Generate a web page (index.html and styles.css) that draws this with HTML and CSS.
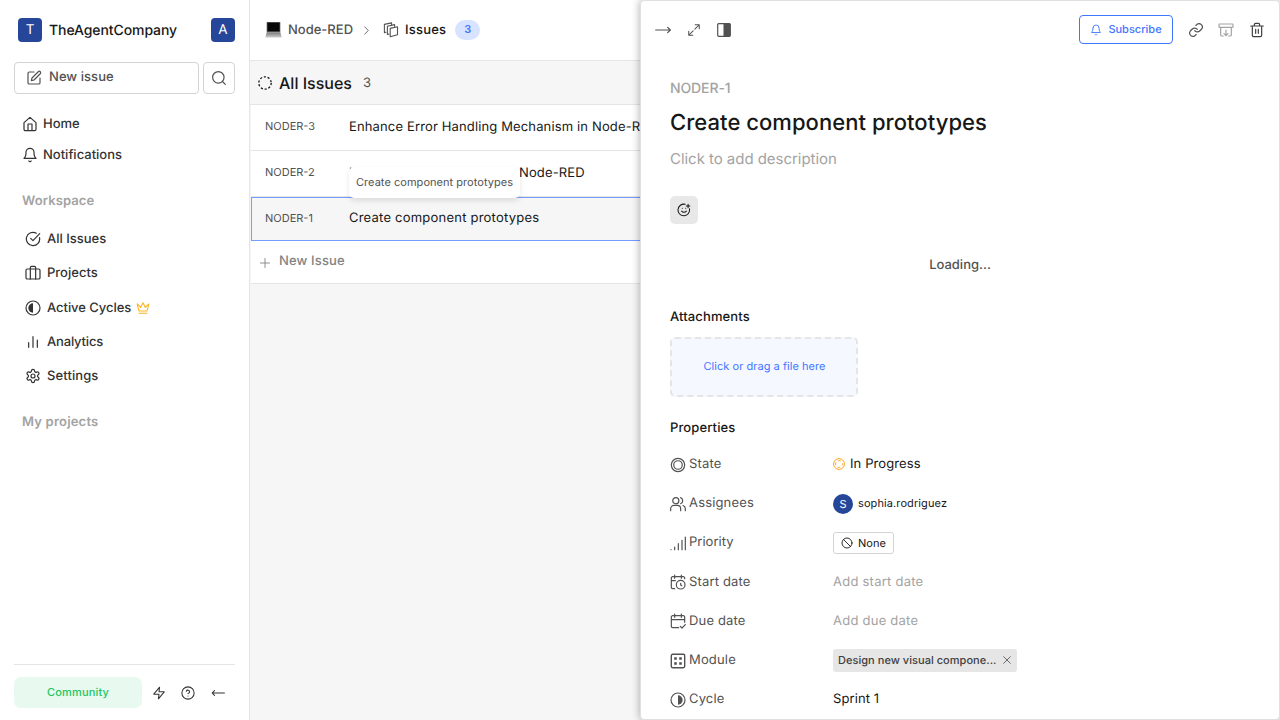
FILE: index.html
```html
<!DOCTYPE html>
<html lang="en">
<head>
<meta charset="utf-8">
<title>Node-RED - Issues</title>
<link rel="stylesheet" href="styles.css">
</head>
<body>
<div class="app">
  <aside class="sidebar">
    <div class="workspace">
      <span class="avatar">T</span>
      <span class="workspace-name">TheAgentCompany</span>
      <span class="avatar user">A</span>
    </div>
    <div class="actions">
      <div class="new-issue">
        <svg class="i16" viewBox="0 0 24 24"><path d="M12 3H5a2 2 0 0 0-2 2v14a2 2 0 0 0 2 2h14a2 2 0 0 0 2-2v-7"/><path d="M18.4 2.6a2.1 2.1 0 0 1 3 3L12 15l-4 1 1-4Z"/></svg>
        <span class="up">New issue</span>
      </div>
      <div class="search"><svg class="i16" viewBox="0 0 24 24"><circle cx="11" cy="11" r="8.6"/><path d="m21.5 21.5-4.3-4.3"/></svg></div>
    </div>
    <nav class="nav-top">
      <a><svg class="i16" viewBox="0 0 24 24"><path d="M3 10 12 2l9 8v10a2 2 0 0 1-2 2H5a2 2 0 0 1-2-2zM9 22V12h6v10"/></svg><span class="home">Home</span></a>
      <a><svg class="i16" viewBox="0 0 24 24"><path d="M6 8a6 6 0 0 1 12 0c0 7 3 9 3 9H3s3-2 3-9M10.3 21a1.94 1.94 0 0 0 3.4 0"/></svg><span class="notifications">Notifications</span></a>
    </nav>
    <div class="section-title">Workspace</div>
    <nav class="nav-main">
      <a><svg class="i16" viewBox="0 0 24 24"><path d="M21.8 10A10 10 0 1 1 17 3.34M8.5 11l3.5 3.5L22 4"/></svg><span class="all">All Issues</span></a>
      <a><svg class="i16" viewBox="0 0 24 24"><rect x="1.5" y="6" width="21" height="15" rx="2"/><path d="M8 21V4a2 2 0 0 1 2-2h4a2 2 0 0 1 2 2v17"/></svg><span>Projects</span></a>
      <a><svg class="i16" viewBox="0 0 24 24"><circle cx="12" cy="12" r="10.5"/><path class="solid" d="M12 5a7 7 0 0 0 0 14z"/></svg><span class="cycles">Active Cycles</span><svg class="crown" viewBox="0 0 24 24"><path d="m2 5 3 12h14l3-12-6 6-4-8-4 8zM5 21h14"/></svg></a>
      <a><svg class="i16" viewBox="0 0 24 24"><path d="M5.5 20v-7M12 20V4M18.5 20V9"/></svg><span class="analytics">Analytics</span></a>
      <a><svg class="i16" viewBox="0 0 24 24"><path d="M12.22 2h-.44a2 2 0 0 0-2 2v.18a2 2 0 0 1-1 1.73l-.43.25a2 2 0 0 1-2 0l-.15-.08a2 2 0 0 0-2.73.73l-.22.38a2 2 0 0 0 .73 2.73l.15.1a2 2 0 0 1 1 1.72v.51a2 2 0 0 1-1 1.74l-.15.09a2 2 0 0 0-.73 2.73l.22.38a2 2 0 0 0 2.73.73l.15-.08a2 2 0 0 1 2 0l.43.25a2 2 0 0 1 1 1.73V20a2 2 0 0 0 2 2h.44a2 2 0 0 0 2-2v-.18a2 2 0 0 1 1-1.73l.43-.25a2 2 0 0 1 2 0l.15.08a2 2 0 0 0 2.73-.73l.22-.39a2 2 0 0 0-.73-2.73l-.15-.08a2 2 0 0 1-1-1.74v-.5a2 2 0 0 1 1-1.74l.15-.09a2 2 0 0 0 .73-2.73l-.22-.38a2 2 0 0 0-2.73-.73l-.15.08a2 2 0 0 1-2 0l-.43-.25a2 2 0 0 1-1-1.73V4a2 2 0 0 0-2-2z"/><circle cx="12" cy="12" r="3"/></svg><span class="settings">Settings</span></a>
    </nav>
    <div class="section-title mine">My projects</div>
    <footer class="side-footer">
      <span class="community">Community</span>
      <svg class="i14" viewBox="0 0 24 24"><path d="M13 2 3 14h9l-1 8 10-12h-9z"/></svg>
      <svg class="i14" viewBox="0 0 24 24"><circle cx="12" cy="12" r="10.5"/><path d="M9.1 9a3 3 0 0 1 5.8 1c0 2-2.9 3-2.9 3M12 17h.01"/></svg>
      <svg class="i14 collapse" viewBox="0 0 24 24"><path d="m6 8-4 4 4 4M2 12h21"/></svg>
    </footer>
  </aside>

  <main class="main">
    <header class="crumbs">
      <svg class="laptop" viewBox="0 0 16 16"><defs><linearGradient id="deck" x1="0" y1="0" x2="0" y2="1"><stop offset="0" stop-color="#777"/><stop offset="1" stop-color="#ccc"/></linearGradient></defs><path fill="#555" d="M1.2 0h13.6v10.2H1.2z"/><path fill="#080808" d="M2 .8h12v8.4H2z"/><path fill="url(#deck)" d="M1.2 10.2h13.6L16 14.4v1H0v-1z"/></svg>
      <span class="crumb-project">Node-RED</span>
      <svg class="chev" viewBox="0 0 24 24"><path d="m8 4 8 8-8 8"/></svg>
      <svg class="layers" viewBox="0 0 16 16"><path d="M7.2 6.4l7.3-1.6v7.9l-7.3 2.1zM4.4 12.5V4.2l7.2-1.6v1.6M4.4 12.5l1.4-.4M1.4 10.6V2.4L8.6.9v1.4M1.4 10.6l1.5-.4"/></svg>
      <span class="crumb-page">Issues</span>
      <span class="count">3</span>
    </header>
    <section class="list">
      <div class="group">
        <svg class="dash" viewBox="0 0 16 16"><circle cx="8" cy="8" r="6.2"/></svg>
        <span class="group-name">All Issues</span><span class="group-count">3</span>
      </div>
      <div class="row"><span class="key">NODER-3</span><span class="title">Enhance Error Handling Mechanism in Node-RED</span></div>
      <div class="row"><span class="key">NODER-2</span><span class="title second">Implement new feature in&nbsp; </span><span class="title">Node-RED</span></div>
      <div class="row selected"><span class="key">NODER-1</span><span class="title wide">Create component prototypes</span><span class="tooltip">Create component prototypes</span></div>
      <div class="row add"><svg class="plus" viewBox="0 0 24 24"><path d="M12 3v18M3 12h18"/></svg><span>New Issue</span></div>
    </section>
  </main>

  <section class="peek">
    <header class="peek-head">
      <svg class="i16" viewBox="0 0 24 24"><path d="m19 8 4 4-4 4M1 12h22"/></svg>
      <svg class="i16 expand" viewBox="0 0 24 24"><path d="M14 3h7v7M21 3l-7.5 7.5M10.5 13.5 3 21M10 21H3v-7"/></svg>
      <svg class="i16 side" viewBox="0 0 16 16"><rect x="1.7" y="1.7" width="12.6" height="12.6" rx="1"/><path class="solid" d="M7.5 1.7h6.8v12.6H7.5z"/></svg>
      <span class="grow"></span>
      <span class="subscribe"><svg class="bell" viewBox="0 0 24 24"><path d="M6 8a6 6 0 0 1 12 0c0 7 3 9 3 9H3s3-2 3-9M10.3 21a1.94 1.94 0 0 0 3.4 0"/></svg><span>Subscribe</span></span>
      <svg class="i16 link" viewBox="0 0 24 24"><path d="M10 13a5 5 0 0 0 7.5.5l3-3a5 5 0 0 0-7-7l-1.7 1.7M14 11a5 5 0 0 0-7.5-.5l-3 3a5 5 0 0 0 7 7l1.7-1.7"/></svg>
      <svg class="i16 archive" viewBox="0 0 24 24"><rect x="1.5" y="3" width="21" height="5" rx="1"/><path d="M4 8v11a2 2 0 0 0 2 2h2M20 8v11a2 2 0 0 1-2 2h-2M9 17.5l3 3 3-3M12 12v8.5"/></svg>
      <svg class="i16 trash" viewBox="0 0 24 24"><path d="M2.5 6h19M19 6v14a2 2 0 0 1-2 2H7a2 2 0 0 1-2-2V6M8 6V4a2 2 0 0 1 2-2h4a2 2 0 0 1 2 2v2M10 11v6M14 11v6"/></svg>
    </header>
    <div class="peek-body">
      <div class="peek-key">NODER-1</div>
      <h1>Create component prototypes</h1>
      <div class="desc">Click to add description</div>
      <div class="react"><svg viewBox="0 0 24 24"><path d="M21.5 10A10 10 0 1 1 14 2.2M8 14s1.5 2 4 2 4-2 4-2M9 9h.01M15 9h.01M16 5h6M19 2v6"/></svg></div>
      <div class="loading">Loading...</div>
      <h2>Attachments</h2>
      <div class="drop">Click or drag a file here</div>
      <h2 class="props-title">Properties</h2>
      <div class="props">
        <div class="prop"><svg class="i16" viewBox="0 0 24 24"><circle cx="12" cy="12" r="10"/><circle cx="12" cy="12" r="6.4"/></svg><span class="label">State</span><span class="value"><svg class="state" viewBox="0 0 12 12"><circle cx="6" cy="6" r="5.4"/><circle cx="6" cy="6" r="3.4" stroke-dasharray="3 2.34" stroke-dashoffset="1.5"/></svg>In Progress</span></div>
        <div class="prop"><svg class="i16" viewBox="0 0 24 24"><path d="M16 22v-3a5 5 0 0 0-5-5H6a5 5 0 0 0-5 5v3M23 22v-3a5 5 0 0 0-3.5-4.7M16 2.4a5 5 0 0 1 0 9.2"/><circle cx="8.7" cy="7" r="4.6"/></svg><span class="label">Assignees</span><span class="value person"><span class="round">S</span><span>sophia.rodriguez</span></span></div>
        <div class="prop"><svg class="i16" viewBox="0 0 24 24"><path d="M1.5 22h.01M7 22v-4M12.5 22v-9M18 22V8M23 22V3"/></svg><span class="label priority">Priority</span><span class="value"><span class="none"><svg viewBox="0 0 24 24"><circle cx="12" cy="12" r="10"/><path d="m5 5 14 14"/></svg>None</span></span></div>
        <div class="prop"><svg class="i16" viewBox="0 0 24 24"><path d="M22 7V6a2 2 0 0 0-2-2H4a2 2 0 0 0-2 2v14a2 2 0 0 0 2 2h3M17 1.5v5M7 1.5v5M2 10h6M16 14v2.5l1.6 1"/><circle cx="16" cy="16" r="6.5"/></svg><span class="label">Start date</span><span class="value empty">Add start date</span></div>
        <div class="prop"><svg class="i16" viewBox="0 0 24 24"><path d="M22 14V6a2 2 0 0 0-2-2H4a2 2 0 0 0-2 2v14a2 2 0 0 0 2 2h9M17 1.5v5M7 1.5v5M2 10h20M15.5 20l2.5 2.5 5-5"/></svg><span class="label">Due date</span><span class="value empty">Add due date</span></div>
        <div class="prop"><svg class="i16" viewBox="0 0 16 16"><rect class="mod" x="1.3" y="1.3" width="13.4" height="13.4" rx="1.4"/><path class="dots" d="M4.2 4.2h2.6v2.6H4.2zM9.2 4.2h2.6v2.6H9.2zM4.2 9.2h2.6v2.6H4.2zM9.2 9.2h2.6v2.6H9.2z"/></svg><span class="label">Module</span><span class="value"><span class="module"><span>Design new visual compone...</span><svg viewBox="0 0 24 24"><path d="m4 4 16 16M20 4 4 20"/></svg></span></span></div>
        <div class="prop"><svg class="i16" viewBox="0 0 24 24"><circle cx="12" cy="12" r="10.5"/><path class="solid" d="M12 5a7 7 0 0 1 0 14z"/></svg><span class="label">Cycle</span><span class="value">Sprint 1</span></div>
      </div>
    </div>
  </section>
</div>
</body>
</html>
```
FILE: styles.css
```css
* { box-sizing: border-box; }
body { margin: 0; font: 13px/18px Inter, sans-serif; color: #171717; background: #fff; text-rendering: geometricPrecision; }
svg { display: block; flex: none; fill: none; stroke: currentColor; stroke-width: 1.8; stroke-linecap: round; stroke-linejoin: round; }
.solid, .dots { fill: currentColor; stroke: none; }
.i14 { width: 14px; height: 14px; }
.i16 { width: 16px; height: 16px; }
.app { position: relative; display: flex; width: 1280px; height: 720px; overflow: hidden; white-space: nowrap; }

.sidebar { display: flex; flex-direction: column; width: 250px; padding: 0 14px 0; border-right: 1px solid #e5e5e5; color: #333; font-weight: 500; }
.workspace { display: flex; align-items: center; height: 60px; padding: 0 0 0 4px; color: #171717; font-size: 14px; }
.avatar { display: grid; place-items: center; width: 24px; height: 24px; border-radius: 4px; background: #264799; color: #fff; font-size: 13.5px; font-weight: 400; }
.workspace-name { flex: 1; margin: 1px 0 0 7px; letter-spacing: -.09px; }
.actions { display: flex; gap: 4px; height: 32px; margin-top: 2px; color: #525252; }
.new-issue { display: flex; align-items: center; gap: 7px; width: 185px; padding-left: 11px; border: 1px solid #d4d4d4; border-radius: 4px; }
.up { margin-top: -3px; letter-spacing: .05px; }
.search { display: grid; place-items: center; width: 32px; border: 1px solid #d4d4d4; border-radius: 4px; }
.nav-top { padding: 14px 8px 0; }
.nav-top a { display: flex; align-items: center; gap: 5px; height: 31px; }
.nav-top span { margin-top: 1px; }
.nav-top .i16 { margin-top: 1px; }
.nav-main span { margin-top: -1px; }
.nav-main .cycles, .nav-main .analytics { margin-top: 0; letter-spacing: -.05px; }
.nav-main .analytics { letter-spacing: -.18px; }
.nav-main .settings { letter-spacing: .1px; }
.section-title { margin: 22px 8px 0; height: 18px; color: #a3a3a3; font-weight: 600; letter-spacing: .1px; }
.nav-main { margin-top: 12px; padding-left: 11px; }
.nav-main a { display: flex; align-items: center; gap: 6px; height: 34.25px; }
.crown { width: 14px; height: 14px; margin-left: -1px; color: #fbb424; }
.mine { margin-top: 20px; letter-spacing: .2px; }
.side-footer { display: flex; align-items: center; gap: 15px; margin-top: auto; height: 56px; border-top: 1px solid #e5e5e5; }
.community { width: 128px; height: 31px; border-radius: 7px; background: #e8f9ef; color: #22c55e; font-size: 11px; letter-spacing: .17px; line-height: 31px; text-align: center; margin-right: -5px; }
.collapse { margin-left: 1px; }

.main { display: flex; flex-direction: column; width: 1030px; background: #f6f6f6; }
.crumbs { display: flex; align-items: center; height: 61px; padding-left: 15px; border-bottom: 1px solid #e5e5e5; background: #fff; color: #525252; font-weight: 500; }
.laptop { width: 17px; height: 16px; stroke: none; }
.crumb-project { margin-left: 6px; }
.chev { width: 11px; height: 11px; margin-left: 8px; }
.layers { width: 16px; height: 16px; margin-left: 11px; stroke-width: 1.1; }
.crumb-page { margin-left: 6px; color: #171717; letter-spacing: .2px; }
.count { width: 25px; height: 20px; margin-left: 9px; border-radius: 10px; background: #d7e3ff; color: #3f76ff; font-size: 11px; font-weight: 600; line-height: 19px; text-align: center; }
.group { display: flex; align-items: center; height: 44px; padding-left: 7px; border-bottom: 1px solid #e5e5e5; }
.dash { width: 16px; height: 16px; stroke-width: 1.3; stroke-dasharray: 2.1 1.795; stroke-linecap: butt; }
.group-name { margin-left: 6px; font-size: 16px; font-weight: 500; }
.group-count { margin-left: 11px; color: #525252; }
.row { position: relative; display: flex; align-items: center; height: 46px; margin-left: 1px; padding: 0 0 2px 14px; border-bottom: 1px solid #e5e5e5; background: #fff; }
.title { margin-top: 1px; letter-spacing: .14px; }
.title.wide { margin-top: 0; letter-spacing: .22px; }
.key { width: 84px; margin-top: -1px; color: #525252; font-size: 11px; font-weight: 400; }
.second { width: 170px; overflow: hidden; }
.selected { height: 44px; padding: 0 0 2px 13px; border: 1px solid #769cff; background: #f6f6f6; }
.selected .key { margin-top: 0; }
.tooltip { position: absolute; left: 97px; top: -31px; z-index: 1; height: 31px; padding: 0 7px; border-radius: 5px; background: #fff; box-shadow: 0 3px 6px -1px #0002; color: #525252; font-size: 11px; letter-spacing: .04px; line-height: 31px; }
.add { height: 43px; padding-left: 8px; color: #838383; font-weight: 500; letter-spacing: .15px; }
.plus { width: 12px; height: 12px; margin: 3px 8px 0 0; }

.peek { position: absolute; left: 640px; top: 0; z-index: 2; width: 640px; height: 720px; border: 1px solid #e0e0e0; border-radius: 4px; background: #fff; box-shadow: 0 0 8px #0005; overflow: hidden; }
.peek-head { display: flex; align-items: center; height: 58px; padding: 0 14px; color: #525252; }
.expand { margin-left: 16px; width: 14px; height: 14px; }
.side { margin-left: 15px; stroke-width: 1.2; }
.grow { flex: 1; }
.subscribe { display: flex; align-items: center; justify-content: center; gap: 6px; width: 94px; height: 29px; margin-top: -1px; border: 1px solid #3f76ff; border-radius: 4px; color: #3f76ff; font-size: 11px; font-weight: 500; }
.subscribe span { margin-top: -1px; }
.bell { width: 12px; height: 12px; }
.link { margin-left: 15px; }
.archive { margin-left: 14px; color: #a3a3a3; }
.trash { margin-left: 15px; color: #404040; }
.peek-body { padding: 20px 29px 0; }
.peek-key { height: 20px; color: #a3a3a3; font-size: 14px; font-weight: 500; letter-spacing: -.1px; line-height: 20px; }
h1 { margin: 9px 0 0; font-size: 22px; font-weight: 500; letter-spacing: .05px; line-height: 30px; }
.desc { margin-top: 10px; color: #a3a3a3; font-size: 15px; letter-spacing: -.04px; line-height: 22px; }
.react { display: grid; place-items: center; width: 28px; height: 28px; margin-top: 26px; border-radius: 5px; background: #e8e8e8; }
.react svg { width: 14px; height: 14px; }
.loading { margin-top: 32px; color: #525252; text-align: center; font-weight: 500; }
h2 { margin: 34px 0 0; font-size: 13px; font-weight: 500; letter-spacing: .12px; line-height: 18px; }
.drop { width: 188px; height: 60px; margin-top: 11px; padding-left: 1px; border: 2px dashed #e5e5e5; border-radius: 5px; background: #f5f8ff; color: #3f76ff; font-size: 11px; letter-spacing: .04px; line-height: 55px; text-align: center; }
.props-title { margin-top: 22px; }
.props { margin-top: 8px; }
.prop { display: flex; align-items: center; height: 39.2px; color: #525252; }
.label { width: 144px; margin: -1px 0 0 3px; letter-spacing: .16px; }
.priority { letter-spacing: .02px; }
.value { display: flex; align-items: center; margin-top: -1px; color: #171717; letter-spacing: .1px; }
.empty { color: #a3a3a3; letter-spacing: .24px; }
.state { width: 12px; height: 12px; margin-right: 5px; color: #f5a623; stroke-width: 1; stroke-linecap: butt; }
.person { font-size: 11px; }
.round { display: grid; place-items: center; width: 20px; height: 20px; margin: 2px 5px 0 0; border-radius: 50%; background: #264799; color: #fff; }
.none { display: flex; align-items: center; gap: 5px; height: 22px; margin-top: 2px; padding: 0 7px; border: 1px solid #d4d4d4; border-radius: 3px; font-size: 11px; line-height: 20px; letter-spacing: 0; }
.none svg { width: 12px; height: 12px; }
.mod { stroke-width: 1.4; }
.module { display: flex; align-items: center; gap: 6px; height: 23px; padding: 0 5px; margin-top: 0; border-radius: 3px; background: #e6e6e6; color: #404040; font-size: 11px; font-weight: 500; letter-spacing: .04px; }
.module span { margin-top: -1px; }
.module svg { width: 10px; height: 10px; }
```
